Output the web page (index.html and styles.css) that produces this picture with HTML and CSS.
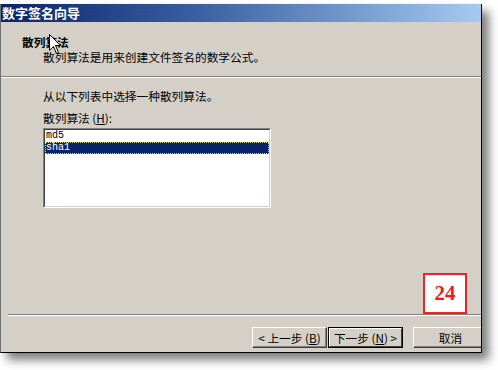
FILE: index.html
```html
<!DOCTYPE html>
<html lang="zh-CN">
<head>
<meta charset="utf-8">
<link rel="stylesheet" href="styles.css">
</head>
<body>
<div class="window">
  <div class="titlebar">数字签名向导</div>
  <div class="header">
    <div class="h-title">散列算法</div>
    <div class="h-sub">散列算法是用来创建文件签名的数学公式。</div>
  </div>
  <div class="sep"></div>
  <div class="content">
    <div class="line">从以下列表中选择一种散列算法。</div>
    <div class="line label">散列算法 (<u>H</u>):</div>
    <div class="listbox">
      <div class="listbox-inner">
        <div class="item">md5</div>
        <div class="item selected">sha1</div>
      </div>
    </div>
  </div>
  <div class="spacer"></div>
  <div class="sep bottom-sep"></div>
  <div class="buttons">
    <div class="btn">&lt; 上一步 (<u>B</u>)</div>
    <div class="btn default"><span class="btn-in">下一步 (<u>N</u>) &gt;</span></div>
    <div class="btn cancel">取消</div>
  </div>
  <div class="badge">24</div>
  <svg class="cursor" width="13" height="21" viewBox="0 0 13 21"><path d="M0.5 0.5 L0.5 16.5 L4.5 12.5 L7.5 19.5 L9.5 18.5 L6.5 11.5 L11.5 11.5 Z" fill="#fff" stroke="#000" stroke-width="1"/></svg>
</div>
</body>
</html>
```
FILE: styles.css
```css
html, body {
  margin: 0;
  padding: 0;
  background: #fff;
}
body {
  width: 498px;
  height: 370px;
  overflow: hidden;
  font-family: "Noto Sans CJK SC", "Liberation Sans", sans-serif;
  font-size: 11.7px;
  color: #000;
}
.window {
  position: relative;
  margin-top: 4px;
  width: 482px;
  height: 349px;
  box-sizing: border-box;
  background: #d4d0c8;
  border-left: 1px solid #707070;
  border-right: 1px solid #000;
  border-bottom: 1px solid #000;
  box-shadow: 7px 7px 9px rgba(0, 0, 0, 0.5);
  display: flex;
  flex-direction: column;
  overflow: hidden;
}
.titlebar {
  height: 18px;
  line-height: 18px;
  padding-left: 1px;
  background: linear-gradient(to right, #0a246a, #3a5ea0 40%, #a6caf0);
  color: #fff;
  font-weight: bold;
  font-size: 13px;
  white-space: nowrap;
}
.header {
  height: 54px;
  box-sizing: border-box;
  padding: 13px 0 0 21px;
}
.h-title {
  font-weight: bold;
  line-height: 14px;
}
.h-sub {
  margin-top: 1px;
  padding-left: 21px;
  line-height: 14px;
}
.sep {
  height: 0;
  border-top: 1px solid #808080;
  border-bottom: 1px solid #fff;
}
.content {
  padding: 11px 0 0 42px;
}
.line {
  line-height: 14px;
}
.label {
  margin-top: 8px;
}
.listbox {
  margin-top: 3px;
  width: 228px;
  height: 80px;
  box-sizing: border-box;
  border: 1px solid;
  border-color: #808080 #fff #fff #808080;
}
.listbox-inner {
  height: 100%;
  box-sizing: border-box;
  border: 1px solid;
  border-color: #404040 #d4d0c8 #d4d0c8 #404040;
  background: #fff;
}
.item {
  height: 12px;
  line-height: 12px;
  padding-left: 1px;
  font-family: "Liberation Mono", monospace;
  font-size: 10px;
}
.selected {
  background: #0a246a;
  color: #fff;
  outline: 1px dotted #d8d880;
  outline-offset: -1px;
}
.spacer {
  flex: 1;
}
.bottom-sep {
  margin-left: 7px;
}
.buttons {
  display: flex;
  justify-content: flex-end;
  margin-right: -7px;
  padding: 11px 0 4px;
}
.btn {
  width: 75px;
  height: 21px;
  box-sizing: border-box;
  border: 1px solid;
  border-color: #fff #404040 #404040 #fff;
  box-shadow: inset -1px -1px 0 #808080;
  display: flex;
  align-items: center;
  justify-content: center;
  white-space: nowrap;
}
.btn u, .label u {
  text-decoration: underline;
}
.default {
  margin-left: 1px;
  border: 1px solid #000;
  box-shadow: none;
  padding: 0;
}
.btn-in {
  flex: 1;
  align-self: stretch;
  display: flex;
  align-items: center;
  justify-content: center;
  border: 1px solid;
  border-color: #fff #404040 #404040 #fff;
}
.cancel {
  margin-left: 10px;
}
.badge {
  position: absolute;
  left: 422px;
  top: 269px;
  width: 44px;
  height: 41px;
  box-sizing: border-box;
  border: 2px solid #f52020;
  background: #fff;
  color: #f01818;
  font-family: "Liberation Serif", serif;
  font-weight: bold;
  font-size: 21px;
  display: flex;
  align-items: center;
  justify-content: center;
}
.cursor {
  position: absolute;
  left: 48px;
  top: 30px;
}
```
